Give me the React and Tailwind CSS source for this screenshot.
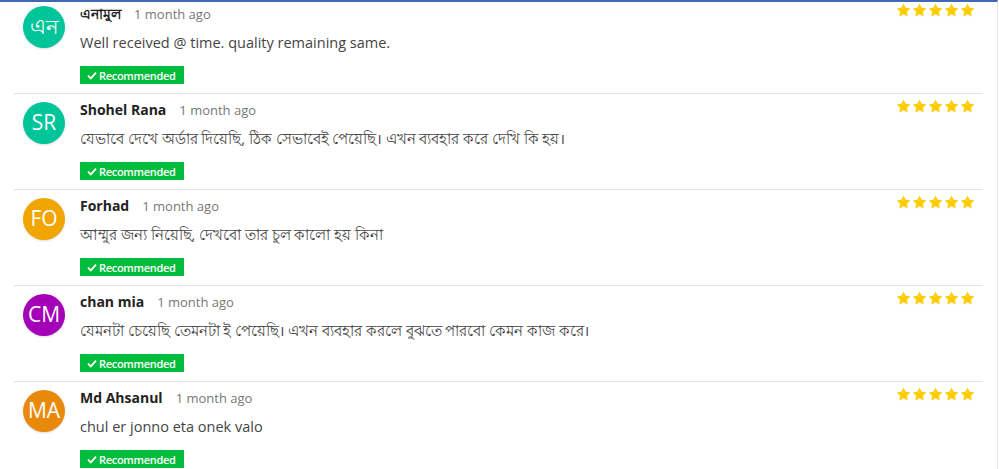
import React from "react";

const reviews = [
  { initials: "এন", name: "এনামুল", text: "Well received @ time. quality remaining same.", color: "bg-[#00c49a]" },
  { initials: "SR", name: "Shohel Rana", text: "যেভাবে দেখে অর্ডার দিয়েছি, ঠিক সেভাবেই পেয়েছি। এখন ব্যবহার করে দেখি কি হয়।", color: "bg-[#00c49a]" },
  { initials: "FO", name: "Forhad", text: "আম্মুর জন্য নিয়েছি, দেখবো তার চুল কালো হয় কিনা", color: "bg-[#f0a500]" },
  { initials: "CM", name: "chan mia", text: "যেমনটা চেয়েছি তেমনটা ই পেয়েছি। এখন ব্যবহার করলে বুঝতে পারবো কেমন কাজ করে।", color: "bg-[#a300b8]" },
  { initials: "MA", name: "Md Ahsanul", text: "chul er jonno eta onek valo", color: "bg-[#e8890a]" },
];

function Star() {
  return (
    <svg width="15" height="14" viewBox="0 0 24 23" className="block">
      <path
        d="M12 0.8l3.4 7.1 7.8 1-5.7 5.4 1.4 7.7L12 18.3l-6.9 3.7 1.4-7.7L0.8 8.9l7.8-1z"
        fill="#ffcc00"
      />
    </svg>
  );
}

function Check() {
  return (
    <svg width="10" height="9" viewBox="0 0 10 9" className="block">
      <path d="M1 4.6l2.8 2.8L9 1.6" stroke="white" strokeWidth="1.9" fill="none" />
    </svg>
  );
}

function Row({ r, first, last }) {
  return (
    <div
      className={
        "flex mx-[14px] pl-[9px] pr-[8px] pb-[9px] " +
        (first ? "pt-[2px] " : "pt-[6px] ") +
        (last ? "" : "border-b border-[#e3e3e3]")
      }
    >
      <div
        className={
          "mt-[2px] w-[42px] h-[42px] rounded-full shrink-0 flex items-center justify-center text-white text-[21px] shadow-[0_1px_2px_rgba(0,0,0,0.15)] " +
          r.color
        }
      >
        {r.initials}
      </div>
      <div className="ml-[15px] flex-1 flex flex-col items-start">
        <div className="flex items-baseline h-[20px] leading-[20px]">
          <span className="text-[14px] font-bold text-[#222]">{r.name}</span>
          <span className="ml-[13px] text-[13px] text-[#777]">1 month ago</span>
        </div>
        <div className="mt-[9px] h-[20px] leading-[20px] text-[14.5px] text-[#444]">{r.text}</div>
        <div className="mt-[13px] h-[18px] flex items-center pl-[7px] pr-[8px] bg-[#02bc3b] text-white text-[11px] font-semibold tracking-[-0.3px] leading-none">
          <Check />
          <span className="ml-[2px]">Recommended</span>
        </div>
      </div>
      <div className="flex gap-[1px] mt-[-1px] self-start">
        <Star />
        <Star />
        <Star />
        <Star />
        <Star />
      </div>
    </div>
  );
}

export default function App() {
  return (
    <div
      className="w-[998px] h-[469px] overflow-hidden bg-white border-t-2 border-[#3f68b5] border-r border-r-[#e6e6e6]"
      style={{ fontFamily: "'Open Sans', 'Noto Sans', sans-serif" }}
    >
      {reviews.map((r, i) => (
        <Row key={i} r={r} first={i === 0} last={i === reviews.length - 1} />
      ))}
    </div>
  );
}
